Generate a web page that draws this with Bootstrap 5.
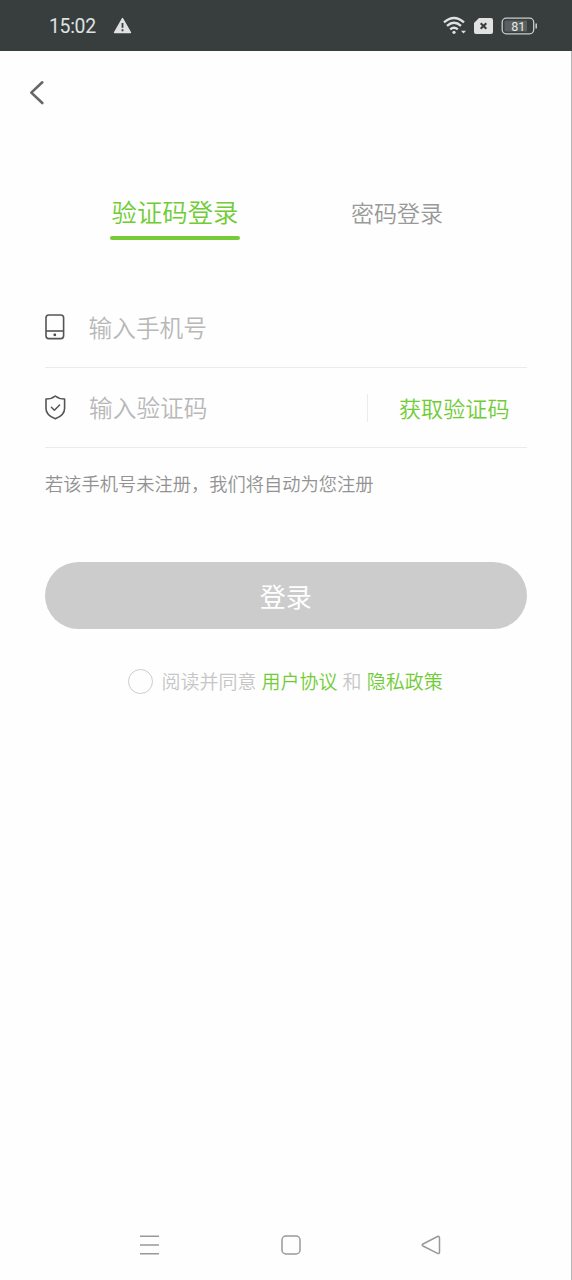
<!DOCTYPE html>
<html lang="zh-CN">
<head>
<meta charset="utf-8">
<meta name="viewport" content="width=device-width, initial-scale=1">
<title>验证码登录</title>
<link href="https://cdn.jsdelivr.net/npm/bootstrap@5.3.0/dist/css/bootstrap.min.css" rel="stylesheet">
<style>
  :root { --brand: #76cc38; --link: #70cc35; --line: #ebebeb; }
  body { font-family: "Noto Sans CJK SC", sans-serif; font-weight: 350; background: #fefefe; }
  svg { display: block; flex: none; }
  .screen { height: 1280px; overflow: hidden; }
  .status-bar { height: 51px; background: #383e3e; color: #dfe2e1; padding: 0 34px 0 49px; }
  .clock { font: 400 19.4px/24px Roboto, sans-serif; letter-spacing: -.3px; width: 64px; margin-top: 2px; }
  .page-body { border-right: 1px solid #b5b5b5; }
  .back-bar { height: 84px; padding-left: 29px; }
  .login-tabs { padding-left: 110px; margin-top: 57px; height: 48px; }
  .tab-item { font-weight: 350; line-height: 38px; height: 48px; white-space: nowrap; background: none; border: 0; padding: 0; text-align: center; }
  .tab-on { width: 130px; color: var(--link); font-size: 25.4px; }
  .tab-on::after { content: ""; display: block; height: 3.5px; margin-top: 6px; border-radius: 2px; background: var(--brand); }
  .tab-off { width: 94px; margin-left: 110px; height: 40px; color: #999; font-size: 23px; }
  .form-area { margin: 48px 44.5px 0 45px; }
  .field-row { height: 80px; border-bottom: 1px solid var(--line); }
  .field-row .form-control { font-weight: 350; font-size: 23.7px; line-height: 36px; height: 36px; margin-bottom: 2px; color: #333; padding: 0; border: 0; background: none; box-shadow: none; border-radius: 0; }
  .field-row .form-control::placeholder { color: #b8b8b8; opacity: 1; }
  .phone-icon { margin-bottom: 2px; }
  .get-code { width: 159.5px; height: 28px; border: 0; border-left: 1px solid var(--line); border-radius: 0; padding: 0 0 0 31px; font-weight: 350; font-size: 22.1px; line-height: 27px; color: var(--link); text-align: left; white-space: nowrap; }
  .hint { font-size: 18.25px; line-height: 28px; color: #929292; margin-top: 21px; white-space: nowrap; }
  .login-btn { height: 67px; margin-top: 65px; background: #ccc; color: #fff; font-weight: 400; font-size: 26px; line-height: 38px; padding: 0; border: 0; }
  .agree { margin-top: 37px; height: 30px; padding-left: 83px; font-size: 19px; line-height: 30px; color: #c6c6c6; white-space: nowrap; word-spacing: .8px; }
  .agree a { color: var(--link); }
  .agree-check { width: 25px; height: 25px; border: 1px solid #ccc; border-radius: 50%; margin-right: 8.5px; }
  .system-nav { height: 70px; padding: 0 130px 0 139px; }
</style>
</head>
<body>
<div class="screen d-flex flex-column">
  <header class="status-bar d-flex align-items-center">
    <span class="clock">15:02</span>
    <svg width="19" height="17" viewBox="0 0 19 17"><path d="M9.5 1.5 17.5 15.5H1.5Z" fill="#dfe2e1" stroke="#dfe2e1" stroke-width="1.4" stroke-linejoin="round"/><path d="M9.5 6v4.8M9.5 12.2v2" stroke="#383e3e" stroke-width="1.8"/></svg>
    <div class="d-flex align-items-center ms-auto">
      <svg width="23" height="19" viewBox="0 0 23 19" fill="none" stroke="#dfe2e1" stroke-width="2.4"><path d="M1 6.300Q11 -2.500 21 6.300M4 9.900Q11 3.700 18 9.900M7.200 13.300Q11 10 14.800 13.300"/><circle cx="11" cy="16.300" r="1.600" fill="#dfe2e1" stroke="none"/><path d="M18 14.800h5l-2.500 2.600z" fill="#dfe2e1" stroke="none"/></svg>
      <svg class="ms-2" width="19" height="16" viewBox="0 0 19 16"><path d="M5 0H17Q19 0 19 2V14Q19 16 17 16H2Q0 16 0 14V5Z" fill="#dfe2e1"/><path d="m6.700 5.200 5.600 5.600m0-5.600-5.600 5.600" stroke="#383e3e" stroke-width="2.100"/></svg>
      <svg class="ms-2" width="37" height="18" viewBox="0 0 37 18"><rect x="1.200" y="1.200" width="31.500" height="15.600" rx="4" fill="none" stroke="#c9cdcc" stroke-width="1.300"/><path d="M5 3.500H26V14.500H5Q3.500 14.500 3.500 13V5Q3.500 3.500 5 3.500Z" fill="#5a605f"/><path d="M35.200 6.500v5" stroke="#c9cdcc" stroke-width="1.500"/><text x="17.300" y="13.500" text-anchor="middle" font-family="Roboto, sans-serif" font-size="12.500" font-weight="400" fill="#e8eaea">81</text></svg>
    </div>
  </header>

  <main class="page-body flex-grow-1 d-flex flex-column">
    <nav class="back-bar d-flex align-items-center">
      <svg width="17" height="26" viewBox="0 0 17 26" fill="none" stroke="#666" stroke-width="2.600" stroke-linecap="round" stroke-linejoin="round"><path d="M13.300 2.300 2.300 12.600l11 10.400"/></svg>
    </nav>

    <div class="login-tabs d-flex" role="tablist">
      <button class="tab-item tab-on" role="tab">验证码登录</button>
      <button class="tab-item tab-off" role="tab">密码登录</button>
    </div>

    <form class="form-area">
      <div class="field-row d-flex align-items-center">
        <svg class="phone-icon" width="20" height="26" viewBox="0 0 20 26" fill="none" stroke="#555" stroke-width="1.600"><rect x="1" y="1" width="17.600" height="23.600" rx="2.800"/><path d="M1 17h17.600"/><circle cx="9.800" cy="20.800" r="1.400" fill="#444" stroke="none"/></svg>
        <input class="form-control" style="margin-left:23.500px" type="tel" placeholder="输入手机号">
      </div>
      <div class="field-row d-flex align-items-center">
        <svg width="21" height="25" viewBox="0 0 21 25" fill="none" stroke="#555" stroke-width="1.600" stroke-linejoin="round" stroke-linecap="round"><path d="M10.300 1Q14 4 19.600 4V13.500C19.600 19 15 22 10.300 23.800C5.600 22 1 19 1 13.500V4Q6.600 4 10.300 1Z"/><path d="m6.400 12.300 3 3 5.200-5.300" stroke-width="1.500"/></svg>
        <input class="form-control" style="margin-left:23px" type="text" placeholder="输入验证码">
        <button class="btn get-code flex-shrink-0" type="button">获取验证码</button>
      </div>
      <p class="hint mb-0">若该手机号未注册，我们将自动为您注册</p>
      <button class="btn login-btn w-100 rounded-pill" type="button">登录</button>
      <div class="agree d-flex align-items-center">
        <span class="agree-check flex-shrink-0"></span>
        <span>阅读并同意 <a class="text-decoration-none" href="#">用户协议</a> 和 <a class="text-decoration-none" href="#">隐私政策</a></span>
      </div>
    </form>

    <footer class="system-nav d-flex align-items-center justify-content-between mt-auto">
      <svg width="21" height="20" viewBox="0 0 21 20" stroke="#999" stroke-width="1.600"><path d="M1 1.200h19M1 10h19M1 18.800h19"/></svg>
      <svg width="20" height="20" viewBox="0 0 20 20" fill="none" stroke="#999" stroke-width="1.500"><rect x="1" y="1" width="18" height="18" rx="4"/></svg>
      <svg width="20" height="20" viewBox="0 0 20 20" fill="none" stroke="#999" stroke-width="1.500"><path d="M2 9 16.500 1.500Q18.500 .8 18.500 3V17Q18.500 19.200 16.500 18.300L2 11Q.3 10 2 9Z"/></svg>
    </footer>
  </main>
</div>
<script src="https://cdn.jsdelivr.net/npm/bootstrap@5.3.0/dist/js/bootstrap.bundle.min.js"></script>
</body>
</html>
